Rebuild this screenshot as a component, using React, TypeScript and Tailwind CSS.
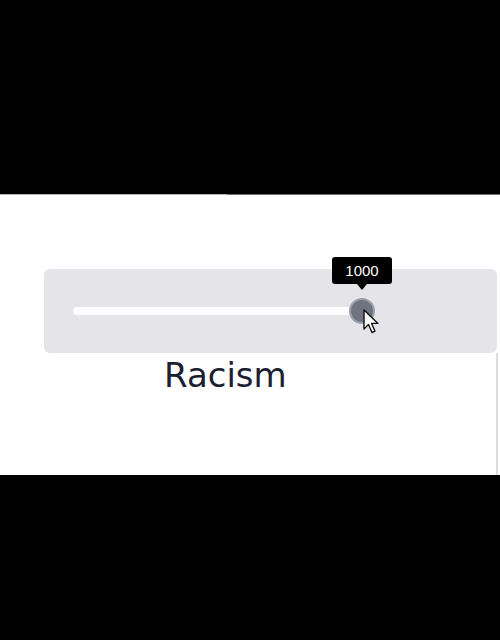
import React from 'react';

const Cursor = () => (
  <svg width="18" height="26" viewBox="0 0 18 26" className="absolute left-[12px] top-[9px]">
    <path d="M1 1 L1 20 L5.5 15.5 L9 23.5 L12 22.2 L8.6 14.4 L15 14.4 Z" fill="#ffffff" stroke="#111111" strokeWidth="1.4" strokeLinejoin="round" />
  </svg>
);

export default function App() {
  return (
    <div className="flex flex-col w-[500px] h-[640px] bg-black overflow-hidden">
      <div className="h-[194px] shrink-0 bg-black" />
      <div className="flex h-[1px] shrink-0">
        <div className="w-[227px] bg-[#b4b4bc]" />
        <div className="flex-1 bg-[#6c6c74]" />
      </div>
      <div className="h-[280px] shrink-0 bg-white flex flex-col pt-[74px]">
        <div className="ml-[44px] w-[453px] h-[84px] rounded-[6px] bg-[#e5e4e8] flex items-center pl-[29px]">
          <div className="w-[279px] h-[8px] rounded-full bg-white" />
          <div className="relative -ml-[3px] w-[26px] h-[26px] rounded-full bg-[#6e7480] border-2 border-[#9ba0aa]">
            <div className="absolute left-1/2 -translate-x-1/2 bottom-[38px] w-[60px] h-[27px] rounded-[3px] bg-black flex items-center justify-center">
              <span className="text-white text-[15px] font-medium leading-none [font-family:'Liberation_Sans',Arial,sans-serif]">1000</span>
              <div className="absolute left-1/2 -translate-x-1/2 top-full w-0 h-0 border-l-[5px] border-r-[5px] border-t-[6px] border-l-transparent border-r-transparent border-t-black" />
            </div>
            <Cursor />
          </div>
        </div>
        <div className="flex flex-1">
          <div className="flex-1 pl-[164px] pt-[2px]">
            <span className="text-[34px] leading-[40px] text-[#1b2030] [font-family:'DejaVu_Sans',sans-serif]">Racism</span>
          </div>
          <div className="w-[2px] mr-[2px] bg-[#dcdce2]" />
        </div>
      </div>
      <div className="flex-1 bg-black" />
    </div>
  );
}
